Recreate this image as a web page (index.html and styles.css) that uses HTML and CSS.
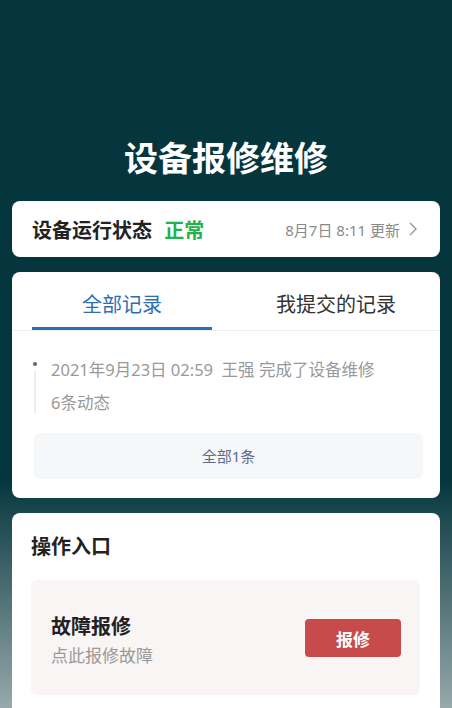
FILE: index.html
```html
<!DOCTYPE html>
<html lang="zh-CN">
<head>
  <meta charset="UTF-8" />
  <meta name="viewport" content="width=device-width, initial-scale=1.0"/>
  <title>设备报修维修</title>
  <link rel="stylesheet" href="styles.css">
</head>
<body>
  <div class="header">设备报修维修</div>

  <!-- 设备运行状态 -->
  <div class="card status-card">
    <div class="status-left">
      <span class="status-title">设备运行状态</span>
      <span class="status-ok">正常</span>
    </div>
    <div class="status-right">
      <span>8月7日 8:11 更新</span>
      <svg class="chevron" width="10" height="16" viewBox="0 0 10 16"><path d="M2 2l6 6-6 6" fill="none" stroke="#999" stroke-width="1.4"/></svg>
    </div>
  </div>

  <!-- 记录 -->
  <div class="card record-card">
    <div class="tabs">
      <div class="tab active"><span>全部记录</span></div>
      <div class="tab"><span>我提交的记录</span></div>
    </div>
    <div class="timeline">
      <div class="timeline-item">
        <div class="line">2021年9月23日 02:59&nbsp; 王强 完成了设备维修</div>
        <div class="line">6条动态</div>
      </div>
    </div>
    <div class="more-btn">全部1条</div>
  </div>

  <!-- 操作入口 -->
  <div class="card action-card">
    <div class="section-title">操作入口</div>
    <div class="action-box">
      <div class="action-text">
        <div class="action-title">故障报修</div>
        <div class="action-sub">点此报修故障</div>
      </div>
      <button class="repair-btn">报修</button>
    </div>
  </div>
</body>
</html>
```

FILE: styles.css
```css
html, body {
  margin: 0;
  padding: 0;
}
body {
  font-family: "Noto Sans", "Noto Sans CJK SC", sans-serif;
  padding: 0 12px;
  min-height: 708px;
  box-sizing: border-box;
  background: linear-gradient(#05363d 0, #05363d 480px, #97a9ab 708px);
  overflow: hidden;
}
.header {
  padding-top: 136px;
  margin-bottom: 21px;
  text-align: center;
  color: #fff;
  font-size: 34px;
  font-weight: bold;
  line-height: 44px;
}
.card {
  background: #fff;
  border-radius: 8px;
  margin-bottom: 15px;
}
/* 设备运行状态 */
.status-card {
  height: 56px;
  padding: 0 22px 0 20px;
  display: flex;
  align-items: center;
  justify-content: space-between;
}
.status-title {
  font-size: 20px;
  font-weight: bold;
  color: #222;
}
.status-ok {
  font-size: 20px;
  font-weight: bold;
  color: #1fb34f;
  margin-left: 8px;
}
.status-right {
  display: flex;
  align-items: center;
  font-size: 15px;
  color: #8a8a8a;
}
.chevron {
  margin-left: 8px;
}
/* 记录 */
.tabs {
  display: flex;
  border-bottom: 1px solid #eeeeee;
}
.tab {
  flex: 1;
  height: 45px;
  padding-top: 10px;
  line-height: 46px;
  text-align: center;
  font-size: 20px;
  color: #333;
  margin: 0 14px 0 20px;
  border-bottom: 3px solid transparent;
}
.tab.active {
  color: #2e6fb4;
  border-bottom-color: #2e6fb4;
}
.timeline {
  padding: 22px 0 0 21px;
}
.timeline-item {
  position: relative;
  padding-left: 18px;
}
.timeline-item::before {
  content: "";
  position: absolute;
  left: 0;
  top: 9px;
  width: 4px;
  height: 4px;
  border-radius: 50%;
  background: #666;
}
.timeline-item::after {
  content: "";
  position: absolute;
  left: 1px;
  top: 18px;
  bottom: 6px;
  width: 2px;
  background: #ececec;
}
.line {
  font-size: 16.5px;
  color: #999;
  line-height: 33px;
}
.more-btn {
  margin: 14px 17px 0 22px;
  height: 46px;
  line-height: 46px;
  border-radius: 6px;
  background: #f6f7f8;
  text-align: center;
  font-size: 15px;
  color: #5a6b8c;
}
.record-card {
  padding-bottom: 19px;
}
/* 操作入口 */
.action-card {
  padding: 20px 20px 40px 19px;
}
.section-title {
  font-size: 20px;
  font-weight: bold;
  color: #222;
  line-height: 28px;
}
.action-box {
  margin-top: 19px;
  height: 115px;
  box-sizing: border-box;
  padding: 6px 19px 0 20px;
  background: #f9f5f4;
  border-radius: 6px;
  display: flex;
  align-items: center;
  justify-content: space-between;
}
.action-title {
  font-size: 20px;
  font-weight: bold;
  color: #222;
  line-height: 28px;
}
.action-sub {
  margin-top: 2px;
  font-size: 17px;
  color: #999;
  line-height: 26px;
}
.repair-btn {
  width: 96px;
  height: 38px;
  margin-bottom: 5px;
  border: none;
  border-radius: 4px;
  background: #c84b4b;
  color: #fff;
  font-family: inherit;
  font-size: 17px;
  font-weight: bold;
}
```
